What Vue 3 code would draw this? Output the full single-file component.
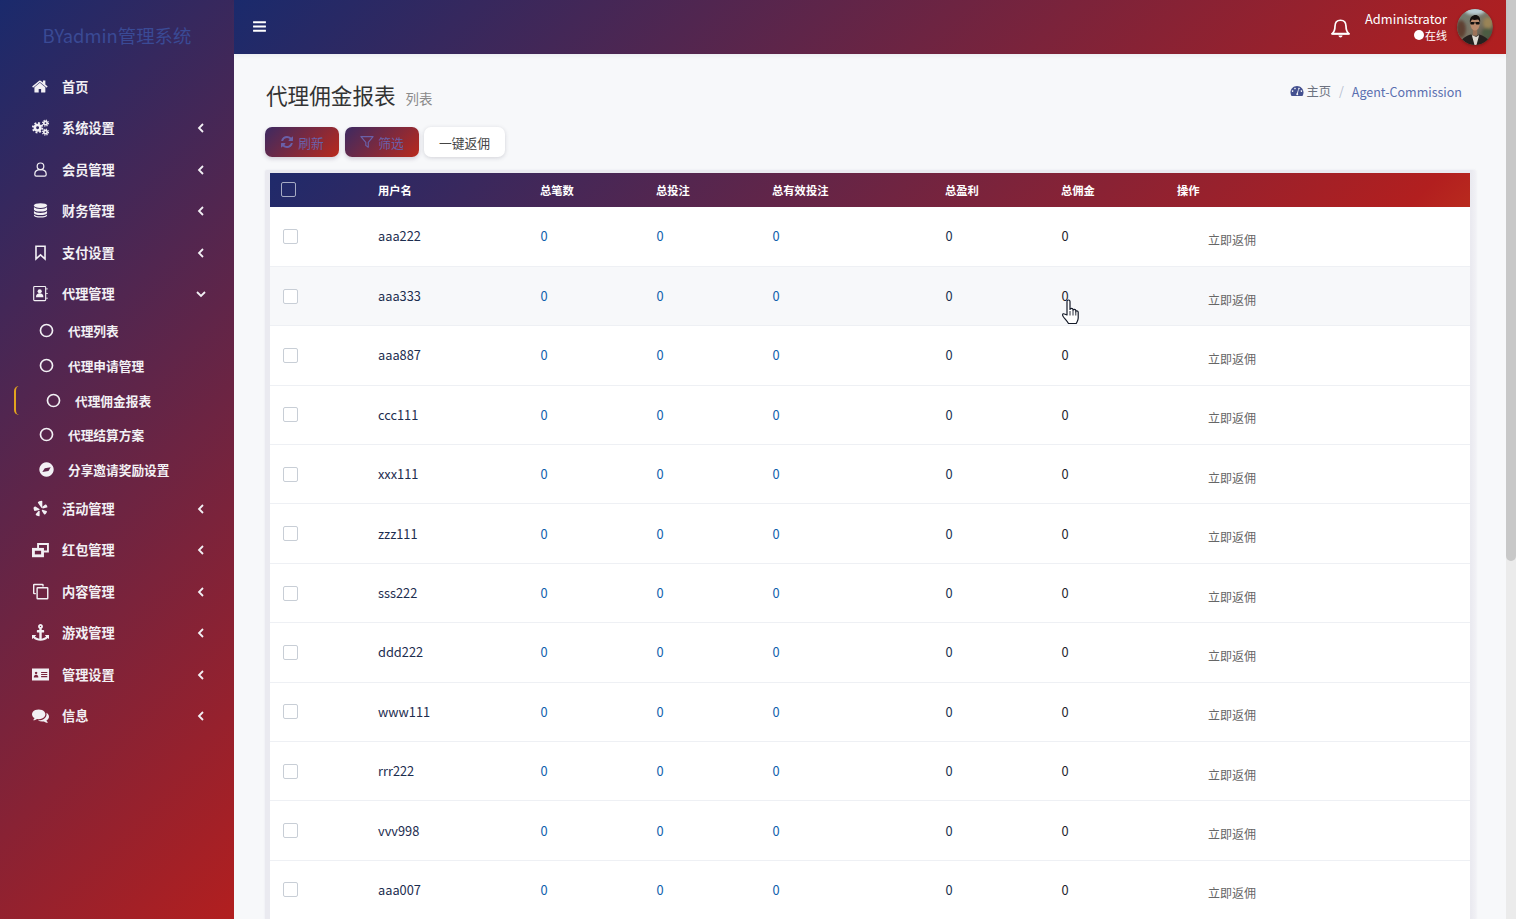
<script setup>
const fa = (d) => `<path fill="currentColor" d="${d}"/>`
const icons = {
  home: fa('M1408 992v480q0 26-19 45t-45 19h-384v-384h-256v384h-384q-26 0-45-19t-19-45v-480q0-1 .5-3t.5-3l575-474 575 474q1 2 1 6zm223-69l-62 74q-8 9-21 11h-3q-13 0-21-7l-692-577-692 577q-12 8-24 7-13-2-21-11l-62-74q-8-10-7-23.5t11-21.5l719-599q32-26 76-26t76 26l244 204v-195q0-14 9-23t23-9h192q14 0 23 9t9 23v408l219 182q10 8 11 21.5t-7 23.5z'),
  cogs: `<g fill="none" stroke="currentColor"><circle cx="590" cy="920" r="290" stroke-width="270"/><circle cx="590" cy="920" r="500" stroke-width="200" stroke-dasharray="196 196"/><circle cx="1420" cy="430" r="180" stroke-width="170"/><circle cx="1420" cy="430" r="310" stroke-width="130" stroke-dasharray="122 122"/><circle cx="1420" cy="1380" r="180" stroke-width="170"/><circle cx="1420" cy="1380" r="310" stroke-width="130" stroke-dasharray="122 122"/></g>`,
  user: `<g fill="none" stroke="currentColor" stroke-width="130"><circle cx="896" cy="560" r="350"/><path d="M896 900c-400 0-600 170-600 470v60q0 170 170 170h860q170 0 170-170v-60c0-300-200-470-600-470z"/></g>`,
  db: `<g fill="currentColor"><ellipse cx="896" cy="370" rx="690" ry="250"/><path d="M206 540c80 130 380 200 690 200s610-70 690-200v240c0 130-310 220-690 220S206 910 206 780zM206 950c80 130 380 200 690 200s610-70 690-200v210c0 130-310 220-690 220S206 1290 206 1160zM206 1310c80 130 380 200 690 200s610-70 690-200v110c0 130-310 220-690 220S206 1550 206 1420z"/></g>`,
  bookmark: `<path fill="none" stroke="currentColor" stroke-width="170" stroke-linejoin="miter" d="M420 240h952v1330l-476-420-476 420z"/>`,
  book: `<g fill="none" stroke="currentColor" stroke-width="120"><rect x="180" y="160" width="1260" height="1480" rx="90"/></g><g fill="currentColor"><circle cx="810" cy="660" r="220"/><path d="M420 1280c0-280 150-400 390-400s390 120 390 400z"/><rect x="1490" y="360" width="170" height="100"/><rect x="1490" y="850" width="170" height="100"/><rect x="1490" y="1340" width="170" height="100"/></g>`,
  yelp: `<g fill="currentColor"><path d="M760 130l270-60q60 0 60 60v640q0 100-100 50L620 290q-30-100 140-160z"/><path d="M170 900q-20-50 20-130l70-70q40-30 100-10l420 250q60 80-30 120l-470 100q-80 0-110-260z"/><path d="M430 1600q-60-50-30-120l300-340q80-40 110 50l-10 490q-40 70-370-80z"/><path d="M1040 1150q-30-100 60-110l440 130q60 50 20 110q-100 210-190 240q-50 20-100-30z"/><path d="M1080 830q-30-80 40-140l280-210q60-20 110 20q120 150 110 230q0 60-60 70l-410 100q-50 0-70-70z"/></g>`,
  ungroup: `<g fill="none" stroke="currentColor"><rect x="150" y="880" width="960" height="680" stroke-width="300"/><path stroke-width="200" d="M640 760V310h1040v800h-480"/></g>`,
  clone: `<g fill="none" stroke="currentColor" stroke-width="150"><path d="M1160 370V220q0-70-70-70H250q-70 0-70 70v830q0 70 70 70h150"/><rect x="540" y="500" width="1120" height="1160" rx="60"/></g>`,
  anchor: fa('M960 256q0-26-19-45t-45-19-45 19-19 45 19 45 45 19 45-19 19-45zm832 928v352q0 22-20 30-8 2-12 2-12 0-23-9l-93-93q-119 143-318.5 226.5t-429.5 83.5-429.5-83.5-318.5-226.5l-93 93q-9 9-23 9-4 0-12-2-20-8-20-30v-352q0-14 9-23t23-9h352q22 0 30 20 8 19-7 35l-100 100q67 91 189.5 153.5t271.5 82.5v-647h-192q-26 0-45-19t-19-45v-128q0-26 19-45t45-19h192v-163q-58-34-93-92.5t-35-128.5q0-106 75-181t181-75 181 75 75 181q0 70-35 128.5t-93 92.5v163h192q26 0 45 19t19 45v128q0 26-19 45t-45 19h-192v647q149-20 271.5-82.5t189.5-153.5l-100-100q-15-16-7-35 8-20 30-20h352q14 0 23 9t9 23z'),
  card: `<path fill="currentColor" fill-rule="evenodd" d="M0 270h1792v1250H0zM430 600a130 130 0 1 0 1 0zM190 1210h480c0-210-90-300-240-300s-240 90-240 300zM960 620v120h650V620zM960 840v120h650V840zM960 1060v120h650v-120z"/>`,
  comments: fa('M1408 768q0 139-94 257t-256.5 186.5-353.5 68.5q-86 0-176-16-124 88-278 128-36 9-86 16h-3q-11 0-20.5-8t-11.5-21q-1-3-1-6.5t.5-6.5 2-6l2.5-5 3.5-5.5 4-5 4.5-5 4-4.5q5-6 23-25t26-29.5 22.5-29 25-38.5 20.5-44q-124-72-195-177t-71-224q0-139 94-257t256.5-186.5 353.5-68.5 353.5 68.5 256.5 186.5 94 257zm384 256q0 120-71 224.5t-195 176.5q10 24 20.5 44t25 38.5 22.5 29 26 29.5 23 25q1 1 4 4.5t4.5 5 4 5 3.5 5.5l2.5 5 2 6 .5 6.5-1 6.5q-3 14-13 22t-22 7q-50-7-86-16-154-40-278-128-90 16-176 16-271 0-472-132 58 4 88 4 161 0 309-45t264-129q125-92 192-212t67-254q0-77-23-152 129 71 204 178t75 230z'),
  circle: `<circle cx="896" cy="896" r="720" fill="none" stroke="currentColor" stroke-width="200"/>`,
  compass: `<path fill="currentColor" fill-rule="evenodd" d="M896 36a860 860 0 1 0 1 0zM1400 620L1130 1070 400 1190 690 740z"/>`,
  bars: fa('M1664 1344v128q0 26-19 45t-45 19h-1408q-26 0-45-19t-19-45v-128q0-26 19-45t45-19h1408q26 0 45 19t19 45zm0-512v128q0 26-19 45t-45 19h-1408q-26 0-45-19t-19-45v-128q0-26 19-45t45-19h1408q26 0 45 19t19 45zm0-512v128q0 26-19 45t-45 19h-1408q-26 0-45-19t-19-45v-128q0-26 19-45t45-19h1408q26 0 45 19t19 45z'),
  refresh: fa('M1639 1056q0 5-1 7-64 268-268 434.5t-478 166.5q-146 0-282.5-55t-243.5-157l-129 129q-19 19-45 19t-45-19-19-45v-448q0-26 19-45t45-19h448q26 0 45 19t19 45-19 45l-137 137q71 66 161 102t187 36q134 0 250-65t186-179q11-17 53-117 8-23 30-23h192q13 0 22.5 9.5t9.5 22.5zm25-800v448q0 26-19 45t-45 19h-448q-26 0-45-19t-19-45 19-45l138-138q-148-137-349-137-134 0-250 65t-186 179q-11 17-53 117-8 23-30 23h-199q-13 0-22.5-9.5t-9.5-22.5v-7q65-268 270-434.5t480-166.5q146 0 284 55.5t245 156.5l130-129q19-19 45-19t45 19 19 45z'),
  filter: `<path fill="none" stroke="currentColor" stroke-width="150" stroke-linejoin="round" d="M120 200h1552L1060 930v640l-320-240V930z"/>`,
  dash: `<path fill="currentColor" fill-rule="evenodd" d="M896 240C430 240 60 610 60 1080c0 170 50 320 130 440h1412c80-120 130-270 130-440 0-470-370-840-836-840zM640 470a100 100 0 1 1-1 0zM1150 470a100 100 0 1 1-1 0zM330 800a100 100 0 1 1-1 0zM1460 800a100 100 0 1 1-1 0zM1060 650l60 30-110 520a130 130 0 1 1-120-30z"/>`,
  bell: `<g fill="none" stroke="currentColor" stroke-width="145" stroke-linecap="round" stroke-linejoin="round"><path d="M896 190c-310 0-470 230-470 520 0 350-90 500-240 620h1420c-150-120-240-270-240-620 0-290-160-520-470-520z"/></g><rect x="100" y="1290" width="1592" height="130" rx="65" fill="currentColor"/><path fill="currentColor" d="M720 1490h352c-20 110-90 170-176 170s-156-60-176-170z"/>`,
}

const before = [
  { icon: 'home', label: '首页', arrow: false },
  { icon: 'cogs', label: '系统设置', arrow: true },
  { icon: 'user', label: '会员管理', arrow: true },
  { icon: 'db', label: '财务管理', arrow: true },
  { icon: 'bookmark', label: '支付设置', arrow: true },
]
const subs = [
  { icon: 'circle', label: '代理列表' },
  { icon: 'circle', label: '代理申请管理' },
  { icon: 'circle', label: '代理佣金报表', active: true },
  { icon: 'circle', label: '代理结算方案' },
  { icon: 'compass', label: '分享邀请奖励设置' },
]
const after = [
  { icon: 'yelp', label: '活动管理', arrow: true },
  { icon: 'ungroup', label: '红包管理', arrow: true },
  { icon: 'clone', label: '内容管理', arrow: true },
  { icon: 'anchor', label: '游戏管理', arrow: true },
  { icon: 'card', label: '管理设置', arrow: true },
  { icon: 'comments', label: '信息', arrow: true },
]
const users = ['aaa222', 'aaa333', 'aaa887', 'ccc111', 'xxx111', 'zzz111', 'sss222', 'ddd222', 'www111', 'rrr222', 'vvv998', 'aaa007']
const heads = ['用户名', '总笔数', '总投注', '总有效投注', '总盈利', '总佣金', '操作']
</script>

<template>
  <div class="root">
    <div class="shell">
      <aside class="side">
        <div class="logo">BYadmin管理系统</div>
        <nav class="nav">
          <a v-for="m in before" :key="m.label" class="item">
            <svg class="ic" viewBox="0 0 1792 1792" v-html="icons[m.icon]"></svg>
            <span class="lbl">{{ m.label }}</span>
            <svg v-if="m.arrow" class="chev" viewBox="0 0 8 10"><path d="M6 1 2 5l4 4" /></svg>
          </a>
          <a class="item">
            <svg class="ic" viewBox="0 0 1792 1792" v-html="icons.book"></svg>
            <span class="lbl">代理管理</span>
            <svg class="chev down" viewBox="0 0 10 8"><path d="M1 2l4 4 4-4" /></svg>
          </a>
          <div class="subs">
            <a v-for="s in subs" :key="s.label" class="sub" :class="{ on: s.active }">
              <svg class="sic" viewBox="0 0 1792 1792" v-html="icons[s.icon]"></svg>
              <span>{{ s.label }}</span>
            </a>
          </div>
          <a v-for="m in after" :key="m.label" class="item">
            <svg class="ic" viewBox="0 0 1792 1792" v-html="icons[m.icon]"></svg>
            <span class="lbl">{{ m.label }}</span>
            <svg v-if="m.arrow" class="chev" viewBox="0 0 8 10"><path d="M6 1 2 5l4 4" /></svg>
          </a>
        </nav>
      </aside>

      <div class="main">
        <header class="top">
          <svg class="bars" viewBox="0 0 1792 1792" v-html="icons.bars"></svg>
          <div class="top-right">
            <svg class="bell" viewBox="0 0 1792 1792" v-html="icons.bell"></svg>
            <div class="who">
              <div class="name">Administrator</div>
              <div class="status"><i class="dot"></i>在线</div>
            </div>
            <svg class="avatar" viewBox="0 0 36 36">
              <defs>
                <linearGradient id="abg" x1="0" y1="0" x2="1" y2="1">
                  <stop offset="0" stop-color="#6f7f76" />
                  <stop offset=".5" stop-color="#7a7565" />
                  <stop offset="1" stop-color="#3e372f" />
                </linearGradient>
                <filter id="abl"><feGaussianBlur stdDeviation="1.6" /></filter>
                <clipPath id="acl"><circle cx="18" cy="18" r="18" /></clipPath>
              </defs>
              <g clip-path="url(#acl)">
                <rect width="36" height="36" fill="url(#abg)" />
                <g filter="url(#abl)">
                  <ellipse cx="18" cy="2" rx="10" ry="4" fill="#b9cdd2" />
                  <ellipse cx="4" cy="20" rx="5" ry="9" fill="#5f4030" />
                  <ellipse cx="31" cy="14" rx="5" ry="6" fill="#9a8456" />
                  <ellipse cx="30" cy="24" rx="5" ry="5" fill="#4c5c42" />
                </g>
                <path d="M3 36c1-7 6-9 11-10.500l4 2.500 4-2.500c5 1.500 10 3.500 11 10.500z" fill="#25211f" />
                <path d="M14.800 26l2.700 10h2l2.700-10-3.200 2z" fill="#ddd8d0" />
                <rect x="15.800" y="20" width="4.400" height="6.500" fill="#9c7258" />
                <ellipse cx="18" cy="15" rx="4.700" ry="6.500" fill="#b98a6c" />
                <path d="M13 14c-1-6 3-8 5.500-8s5.500 2 4.500 8c-.6-2.500-1.300-3.500-2-3.500-2.500 .6-4.500 .6-6 0-.8 1-1.200 2-2 3.500z" fill="#15110e" />
                <rect x="13.300" y="13" width="4" height="2.600" rx="1" fill="#0f0f0f" />
                <rect x="18.700" y="13" width="4" height="2.600" rx="1" fill="#0f0f0f" />
                <rect x="17" y="13.500" width="2" height=".6" fill="#0f0f0f" />
              </g>
            </svg>
          </div>
        </header>

        <section class="content">
          <div class="title-row">
            <h1 class="title">代理佣金报表<small>列表</small></h1>
            <div class="crumb">
              <svg class="dash" viewBox="0 0 1792 1792" v-html="icons.dash"></svg>
              <span class="home">主页</span>
              <span class="sep">/</span>
              <span class="cur">Agent-Commission</span>
            </div>
          </div>

          <div class="tools">
            <button class="btn grad">
              <svg class="bi" viewBox="0 0 1792 1792" v-html="icons.refresh"></svg>刷新
            </button>
            <button class="btn grad">
              <svg class="bi" viewBox="0 0 1792 1792" v-html="icons.filter"></svg>筛选
            </button>
            <button class="btn plain">一键返佣</button>
          </div>

          <div class="card">
            <table class="tbl">
              <colgroup>
                <col class="c0" /><col class="c1" /><col class="c2" /><col class="c2" />
                <col class="c3" /><col class="c2" /><col class="c2" /><col />
              </colgroup>
              <thead>
                <tr>
                  <th><span class="chk hd"></span></th>
                  <th v-for="h in heads" :key="h">{{ h }}</th>
                </tr>
              </thead>
              <tbody>
                <tr v-for="(u, i) in users" :key="u" :class="{ hov: i === 1 }">
                  <td><span class="chk"></span></td>
                  <td class="user">{{ u }}</td>
                  <td class="blue">0</td>
                  <td class="blue">0</td>
                  <td class="blue">0</td>
                  <td class="navy">0</td>
                  <td class="ink">0</td>
                  <td class="act"><span>立即返佣</span></td>
                </tr>
              </tbody>
            </table>
          </div>
        </section>

        <svg class="hand" viewBox="0 0 18 26">
          <path d="M6 2.500c0-2 3-2 3 0v8c0-1.500 3-1.500 3 0v1c0-1.500 2.800-1.500 2.800 .3v1c0-1.400 2.400-1.200 2.400 .5v5.700c0 2.500-1 3.500-2 5.500H7.500c-1-2-3-4-5-6.500-1.600-2-1-4 1-3L6 16z" fill="#fff" stroke="#141a28" stroke-width="1.200" stroke-linejoin="round" />
          <path d="M9 12v4.500M12 12v4.500M14.800 13v3.500" fill="none" stroke="#141a28" stroke-width=".9" />
        </svg>
      </div>
    </div>
    <div class="track"><div class="thumb"></div></div>
  </div>
</template>

<style scoped>
.root {
  display: flex;
  height: 100vh;
  overflow: hidden;
  font-family: "Noto Sans CJK SC", "Noto Sans", sans-serif;
}
.shell {
  display: flex;
  flex: 1;
  min-width: 0;
  background: #f7f8fa;
  color: #333;
}
.track { flex: 0 0 10px; background: #ebebeb; }
.thumb { height: 561px; background: #c8c8c8; border-radius: 0 0 6px 6px; }
.side {
  flex: 0 0 234px;
  background: linear-gradient(135deg, #1a2a6c, #b21f1f);
  color: #f2f0f4;
}
.logo {
  height: 54px;
  line-height: 70px;
  text-align: center;
  font-size: 18.400px;
  color: #3a4a95;
}
.nav { padding-top: 11.300px; }
.item {
  display: flex;
  align-items: center;
  height: 41.500px;
  padding-left: 32px;
}
.ic { width: 17px; height: 17px; flex: none; }
.lbl {
  margin-left: 13px;
  font-size: 13.200px;
  font-weight: 700;
  flex: 1;
}
.chev {
  width: 8px;
  height: 10px;
  margin: 1px 29px 0 0;
  fill: none;
  stroke: currentColor;
  stroke-width: 1.800;
}
.chev.down { width: 10px; height: 8px; margin: 1px 28px 0 0; }
.subs { margin-top: -1px; padding-bottom: .700px; }
.sub {
  position: relative;
  display: flex;
  align-items: center;
  height: 34.700px;
  padding-left: 39px;
  font-size: 12.700px;
  font-weight: 700;
}
.sic { width: 15px; height: 15px; margin-right: 14px; flex: none; }
.sub.on { padding-left: 46px; }
.sub.on::before {
  content: "";
  position: absolute;
  left: 14px;
  top: 3px;
  width: 5px;
  height: 29px;
  border-left: 2px solid #e2a41f;
  border-radius: 6px 0 0 6px;
  box-sizing: border-box;
}
.main { position: relative; flex: 1; min-width: 0; }
.top {
  display: flex;
  align-items: center;
  justify-content: space-between;
  height: 54px;
  padding: 0 13px 0 18px;
  background: linear-gradient(135deg, #1a2a6c, #b21f1f);
  color: #fff;
  box-shadow: 0 2px 4px rgba(120, 120, 140, .08);
}
.bars { width: 15px; height: 15px; margin-top: -2px; }
.top-right { display: flex; align-items: center; }
.bell { width: 21px; height: 21px; margin: 2px 14px 0 0; }
.who { text-align: right; margin-top: -1px; }
.name { font-size: 12.800px; line-height: 17px; }
.status {
  display: flex;
  justify-content: flex-end;
  align-items: center;
  font-size: 11px;
  line-height: 16px;
}
.dot {
  width: 10px;
  height: 10px;
  border-radius: 50%;
  background: #fff;
  margin-right: 1px;
}
.avatar { width: 36px; height: 36px; margin-left: 10px; border-radius: 50%; box-shadow: 0 1px 3px rgba(0,0,0,.3); }
.content { padding: 25px 30px 0 31px; }
.title-row {
  display: flex;
  justify-content: space-between;
  height: 48px;
}
.title {
  margin: 0 0 0 1px;
  font-size: 21.600px;
  font-weight: 400;
  line-height: 32px;
  color: #333;
}
.title small {
  margin-left: 10px;
  font-size: 13.400px;
  color: #8a8a8a;
}
.crumb {
  display: flex;
  align-items: center;
  height: 24px;
  margin-right: 14px;
  font-size: 12.300px;
}
.dash { width: 14px; height: 14px; color: #44508f; margin-right: 2px; }
.home { color: #6c7280; }
.sep { margin: 0 8px; color: #b5bed0; }
.cur { color: #5a6fb0; font-size: 12.500px; }
.tools { display: flex; height: 30px; margin-bottom: 13px; }
.btn {
  height: 30px;
  border: 0;
  border-radius: 7px;
  font: inherit;
  font-size: 12.800px;
  display: inline-flex;
  align-items: center;
  justify-content: center;
  padding: 0;
}
.grad {
  width: 74px;
  margin-right: 6px;
  background: linear-gradient(135deg, #3d2a62, #b9291c);
  color: #6a60a8;
  box-shadow: 0 2px 4px rgba(60, 40, 80, .2);
}
.bi { width: 14px; height: 14px; margin-right: 4px; }
.plain {
  width: 81px;
  margin-left: -1px;
  background: #fff;
  color: #444;
  box-shadow: 0 1px 4px rgba(60, 60, 80, .2);
}
.card {
  padding: 3px 6px 0 5px;
  background: linear-gradient(90deg, #eaeaf0 99.600%, #f1f1f5 100%);
  box-shadow: 0 0 2px rgba(225, 225, 232, .7);
  border-radius: 2px 2px 0 0;
}
.tbl {
  width: 100%;
  table-layout: fixed;
  border-collapse: collapse;
  background: #fff;
}
.c0 { width: 108px; }
.c1 { width: 162px; }
.c2 { width: 116px; }
.c3 { width: 173px; }
th {
  height: 34px;
  padding: 0;
  text-align: left;
  font-size: 11.300px;
  font-weight: 700;
  color: #fff;
}
thead tr { background: linear-gradient(135deg, #1f2a6b 0%, #b21f1f 95%, #b92a1e 100%); }
td {
  height: 59.400px;
  padding: 0 0 1px;
  font-size: 12.800px;
  border-bottom: 1px solid #eef0f4;
  box-sizing: border-box;
  vertical-align: middle;
}
.hov td { background: #f7f8fa; }
.chk {
  display: block;
  box-sizing: border-box;
  width: 15px;
  height: 15px;
  margin: 1px 0 0 13px;
  border: 1px solid #c8ced6;
  border-radius: 2px;
  background: #fff;
}
.chk.hd {
  margin: -1px 0 0 11px;
  border-color: #a6abc4;
  background: transparent;
}
.user { color: #1d2d4f; }
.blue { color: #0f62ad; padding-left: .500px; }
.navy { color: #203050; padding-left: .500px; }
.ink { color: #1f2530; padding-left: .500px; }
.act { padding: 6px 0 0 31px; color: #666; font-size: 12px; }
.hand {
  position: absolute;
  left: 827px;
  top: 299px;
  width: 18px;
  height: 26px;
}
</style>
